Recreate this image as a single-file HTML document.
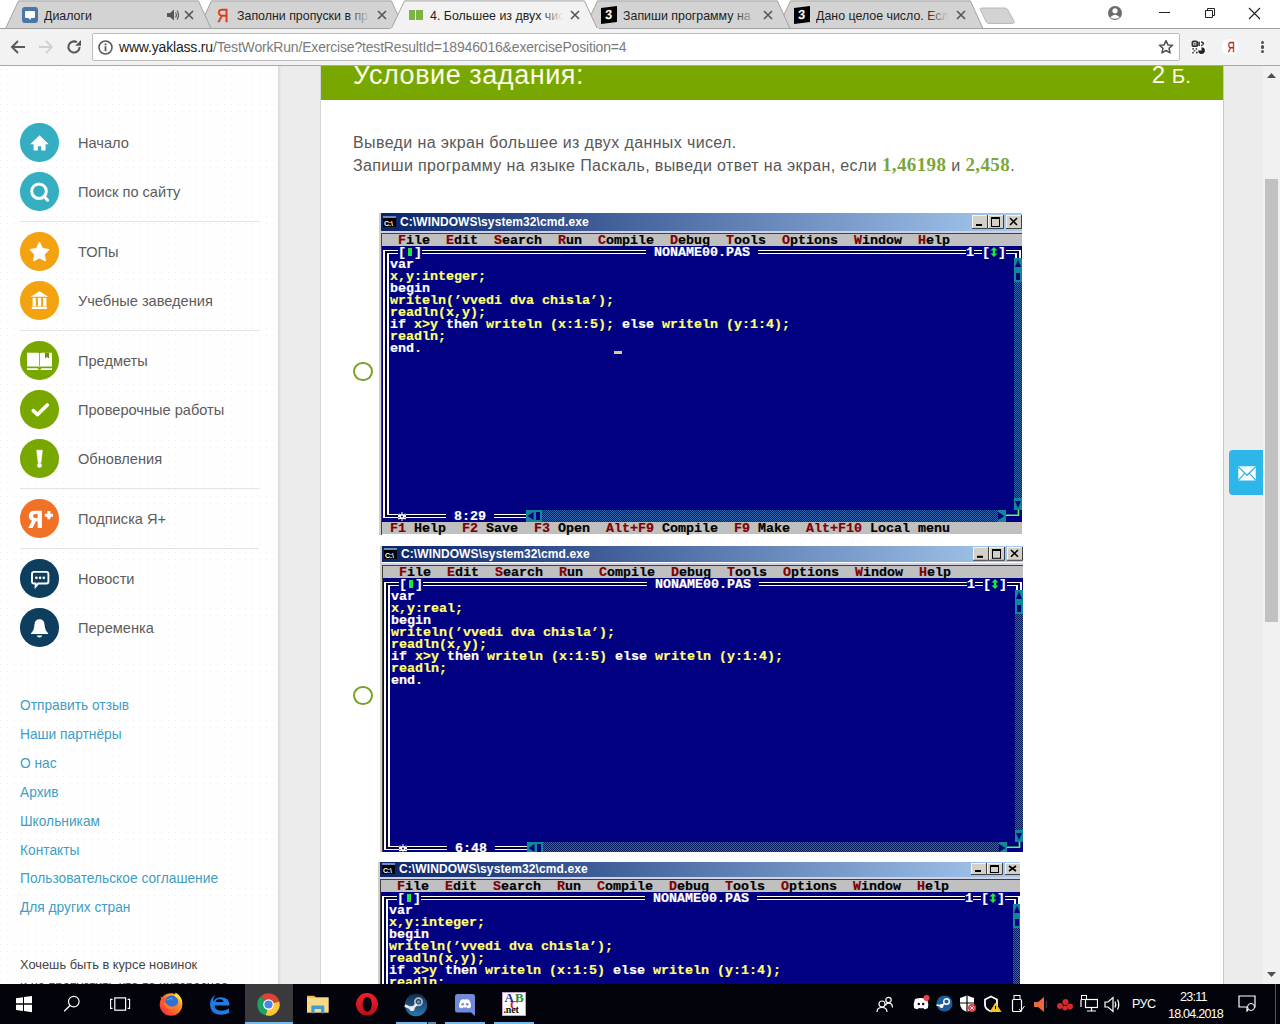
<!DOCTYPE html><html><head><meta charset="utf-8"><title>yaklass</title><style>
html,body{margin:0;padding:0;width:1280px;height:1024px;overflow:hidden;background:#fff;position:relative;font-family:"Liberation Sans",sans-serif}
div,svg{box-sizing:content-box}
</style></head><body>
<div style="position:absolute;left:0;top:66px;width:1280px;height:918px;background:#ececec"></div>
<div style="position:absolute;left:0;top:66px;width:278px;height:918px;background-color:#fff;background-image:radial-gradient(circle at 0.5px 3.5px,#ededed 0.5px,rgba(255,255,255,0) 0.9px);background-size:7px 7px;border-right:1px solid #dadada;box-shadow:1px 0 2px rgba(0,0,0,0.08)"></div>
<div style="position:absolute;left:20px;top:123.25px;width:38.5px;height:38.5px;border-radius:50%;background:#35aec2"></div>
<svg style="position:absolute;left:19.5px;top:122.5px" width="40" height="40" viewBox="0 0 40 40"><path d="M19.5,12.3 L28.8,21.2 H25.6 V27.4 H21.3 V23.3 H17.8 V27.4 H13.6 V21.2 H10.3 Z" fill="#fff"/></svg>
<div style="position:absolute;left:78px;top:132.5px;font:14.6px/20px 'Liberation Sans',sans-serif;color:#5c5c5c;white-space:nowrap">Начало</div>
<div style="position:absolute;left:20px;top:172.25px;width:38.5px;height:38.5px;border-radius:50%;background:#35aec2"></div>
<svg style="position:absolute;left:19.5px;top:171.5px" width="40" height="40" viewBox="0 0 40 40"><circle cx="19" cy="19.2" r="7.3" fill="none" stroke="#fff" stroke-width="3"/><path d="M24.2,24.6 L27.6,28.2" stroke="#fff" stroke-width="3" stroke-linecap="round"/></svg>
<div style="position:absolute;left:78px;top:181.5px;font:14.6px/20px 'Liberation Sans',sans-serif;color:#5c5c5c;white-space:nowrap">Поиск по сайту</div>
<div style="position:absolute;left:20px;top:232.25px;width:38.5px;height:38.5px;border-radius:50%;background:#f2a30f"></div>
<svg style="position:absolute;left:19.5px;top:231.5px" width="40" height="40" viewBox="0 0 40 40"><path d="M19.5,10.6 L22.4,16.6 L28.8,17.6 L24.2,22.3 L25.3,28.6 L19.5,25.6 L13.7,28.6 L14.8,22.3 L10.2,17.6 L16.6,16.6Z" fill="#fff" stroke="#fff" stroke-width="1.2" stroke-linejoin="round"/></svg>
<div style="position:absolute;left:78px;top:241.5px;font:14.6px/20px 'Liberation Sans',sans-serif;color:#5c5c5c;white-space:nowrap">ТОПы</div>
<div style="position:absolute;left:20px;top:281.25px;width:38.5px;height:38.5px;border-radius:50%;background:#f2a30f"></div>
<svg style="position:absolute;left:19.5px;top:280.5px" width="40" height="40" viewBox="0 0 40 40"><path d="M19.5,10.2 L28.3,15.7 H10.7Z" fill="#fff"/><rect x="12.6" y="16.9" width="3.2" height="8.4" fill="#fff"/><rect x="17.9" y="16.9" width="3.2" height="8.4" fill="#fff"/><rect x="23.2" y="16.9" width="3.2" height="8.4" fill="#fff"/><rect x="11.8" y="25.7" width="15.2" height="2.3" fill="#fff"/></svg>
<div style="position:absolute;left:78px;top:290.5px;font:14.6px/20px 'Liberation Sans',sans-serif;color:#5c5c5c;white-space:nowrap">Учебные заведения</div>
<div style="position:absolute;left:20px;top:341.25px;width:38.5px;height:38.5px;border-radius:50%;background:#78a800"></div>
<svg style="position:absolute;left:19.5px;top:340.5px" width="40" height="40" viewBox="0 0 40 40"><path d="M7,11.7 H17.6 Q19.5,11.7 19.5,13.6 V26.2 Q19,25.6 18,25.6 H7Z M32,11.7 H21.4 Q19.5,11.7 19.5,13.6 V26.2 Q20,25.6 21,25.6 H32Z" fill="#fff"/><path d="M25,11.7 V17.6 L27,16 L29,17.6 V11.7Z" fill="#6d9500"/><path d="M7,27.3 H17.6 L19.5,29.1 L21.4,27.3 H32 V29.1 H7Z" fill="#fff"/><path d="M17.6,27.3 L19.5,29.1 L21.4,27.3" fill="none" stroke="#78a800" stroke-width="0.8"/><rect x="19.1" y="13" width="0.8" height="12.6" fill="#78a800"/></svg>
<div style="position:absolute;left:78px;top:350.5px;font:14.6px/20px 'Liberation Sans',sans-serif;color:#5c5c5c;white-space:nowrap">Предметы</div>
<div style="position:absolute;left:20px;top:390.25px;width:38.5px;height:38.5px;border-radius:50%;background:#78a800"></div>
<svg style="position:absolute;left:19.5px;top:389.5px" width="40" height="40" viewBox="0 0 40 40"><path d="M13.2,20.6 L17.6,24.6 L27.3,14.9" fill="none" stroke="#fff" stroke-width="3.6" stroke-linecap="round" stroke-linejoin="round"/></svg>
<div style="position:absolute;left:78px;top:399.5px;font:14.6px/20px 'Liberation Sans',sans-serif;color:#5c5c5c;white-space:nowrap">Проверочные работы</div>
<div style="position:absolute;left:20px;top:439.25px;width:38.5px;height:38.5px;border-radius:50%;background:#78a800"></div>
<svg style="position:absolute;left:19.5px;top:438.5px" width="40" height="40" viewBox="0 0 40 40"><path d="M16.7,11.2 H22.4 L21,23.5 H18.2Z" fill="#fff" stroke="#fff" stroke-width="0.6" stroke-linejoin="round"/><circle cx="19.5" cy="26.4" r="2.4" fill="#fff"/></svg>
<div style="position:absolute;left:78px;top:448.5px;font:14.6px/20px 'Liberation Sans',sans-serif;color:#5c5c5c;white-space:nowrap">Обновления</div>
<div style="position:absolute;left:20px;top:499.25px;width:38.5px;height:38.5px;border-radius:50%;background:#f07227"></div>
<svg style="position:absolute;left:19.5px;top:498.5px" width="40" height="40" viewBox="0 0 40 40"><path d="M21.9,11.7 H15.2 Q8.8,11.7 8.8,17 Q8.8,20.5 12,21.7 L8.2,28.9 H12.6 L15.9,22.2 H17.7 V28.9 H21.9Z M17.7,15 H15.6 Q13,15 13,17 Q13,19 15.6,19 H17.7Z" fill="#fff" fill-rule="evenodd"/><path d="M28.9,12.1 V20.3 M24.8,16.2 H33" stroke="#fff" stroke-width="3"/></svg>
<div style="position:absolute;left:78px;top:508.5px;font:14.6px/20px 'Liberation Sans',sans-serif;color:#5c5c5c;white-space:nowrap">Подписка Я+</div>
<div style="position:absolute;left:20px;top:559.25px;width:38.5px;height:38.5px;border-radius:50%;background:#0e3e5d"></div>
<svg style="position:absolute;left:19.5px;top:558.5px" width="40" height="40" viewBox="0 0 40 40"><path d="M14,12.9 H26.4 Q28.4,12.9 28.4,14.9 V22.5 Q28.4,24.5 26.4,24.5 H18.3 L15.6,27.6 V24.5 H14 Q12,24.5 12,22.5 V14.9 Q12,12.9 14,12.9Z" fill="none" stroke="#fff" stroke-width="1.9"/><circle cx="16.4" cy="18.8" r="1.35" fill="#fff"/><circle cx="20.1" cy="18.8" r="1.35" fill="#fff"/><circle cx="23.8" cy="18.8" r="1.35" fill="#fff"/></svg>
<div style="position:absolute;left:78px;top:568.5px;font:14.6px/20px 'Liberation Sans',sans-serif;color:#5c5c5c;white-space:nowrap">Новости</div>
<div style="position:absolute;left:20px;top:608.25px;width:38.5px;height:38.5px;border-radius:50%;background:#0e3e5d"></div>
<svg style="position:absolute;left:19.5px;top:607.5px" width="40" height="40" viewBox="0 0 40 40"><path d="M19.5,11.2 Q24.3,11.2 24.6,17 Q24.8,22 28.1,25.3 V26.1 H11 V25.3 Q14.3,22 14.4,17 Q14.7,11.2 19.5,11.2Z" fill="#fff"/><path d="M16.7,27.4 H22.2 Q21.6,29.5 19.5,29.5 Q17.3,29.5 16.7,27.4Z" fill="#fff"/></svg>
<div style="position:absolute;left:78px;top:617.5px;font:14.6px/20px 'Liberation Sans',sans-serif;color:#5c5c5c;white-space:nowrap">Переменка</div>
<div style="position:absolute;left:20px;top:221.0px;width:239px;height:1px;background:#e3e3e3"></div>
<div style="position:absolute;left:20px;top:330.0px;width:239px;height:1px;background:#e3e3e3"></div>
<div style="position:absolute;left:20px;top:488.0px;width:239px;height:1px;background:#e3e3e3"></div>
<div style="position:absolute;left:20px;top:548.0px;width:239px;height:1px;background:#e3e3e3"></div>
<div style="position:absolute;left:20px;top:697.2px;font:13.75px/18px 'Liberation Sans',sans-serif;color:#3f9dc3;white-space:nowrap">Отправить отзыв</div>
<div style="position:absolute;left:20px;top:726.0600000000001px;font:13.75px/18px 'Liberation Sans',sans-serif;color:#3f9dc3;white-space:nowrap">Наши партнёры</div>
<div style="position:absolute;left:20px;top:754.9200000000001px;font:13.75px/18px 'Liberation Sans',sans-serif;color:#3f9dc3;white-space:nowrap">О нас</div>
<div style="position:absolute;left:20px;top:783.7800000000001px;font:13.75px/18px 'Liberation Sans',sans-serif;color:#3f9dc3;white-space:nowrap">Архив</div>
<div style="position:absolute;left:20px;top:812.6400000000001px;font:13.75px/18px 'Liberation Sans',sans-serif;color:#3f9dc3;white-space:nowrap">Школьникам</div>
<div style="position:absolute;left:20px;top:841.5px;font:13.75px/18px 'Liberation Sans',sans-serif;color:#3f9dc3;white-space:nowrap">Контакты</div>
<div style="position:absolute;left:20px;top:870.36px;font:13.75px/18px 'Liberation Sans',sans-serif;color:#3f9dc3;white-space:nowrap">Пользовательское соглашение</div>
<div style="position:absolute;left:20px;top:899.22px;font:13.75px/18px 'Liberation Sans',sans-serif;color:#3f9dc3;white-space:nowrap">Для других стран</div>
<div style="position:absolute;left:20px;top:955.8px;font:12.85px/18px 'Liberation Sans',sans-serif;color:#444;white-space:nowrap">Хочешь быть в курсе новинок</div>
<div style="position:absolute;left:20px;top:977px;font:12.85px/18px 'Liberation Sans',sans-serif;color:#444;white-space:nowrap">и не пропустить что-то интересное</div>
<div style="position:absolute;left:320px;top:66px;width:902px;height:918px;background:#fff;border-left:1px solid #d6d6d6;border-right:1px solid #c8c8c8"></div>
<div style="position:absolute;left:321px;top:66px;width:902px;height:34px;background:#78a800;overflow:hidden"><div style="position:absolute;left:32px;top:-11.5px;font:27px/40px 'Liberation Sans',sans-serif;color:#fdfde8;letter-spacing:0.56px;white-space:nowrap">Условие задания:</div><div style="position:absolute;right:32px;top:-11px;font:24px/40px 'Liberation Sans',sans-serif;color:#fdfde8;white-space:nowrap">2 <span style="font-size:20.5px">Б.</span></div></div>
<div style="position:absolute;left:353px;top:132.4px;font:16px/22px 'Liberation Sans',sans-serif;color:#585858;white-space:nowrap;letter-spacing:0.38px">Выведи на экран большее из двух данных чисел.</div>
<div style="position:absolute;left:353px;top:153.9px;font:16px/22px 'Liberation Sans',sans-serif;color:#585858;white-space:nowrap;letter-spacing:0.38px">Запиши программу на языке Паскаль, выведи ответ на экран, если <span style="font:bold 19px/22px 'Liberation Serif',serif;color:#7aa63c;letter-spacing:0.4px">1,46198</span> и <span style="font:bold 19px/22px 'Liberation Serif',serif;color:#7aa63c;letter-spacing:0.4px">2,458</span>.</div>
<div style="position:absolute;left:353.3px;top:362.2px;width:15.3px;height:15.3px;border:2.1px solid #78a22a;border-radius:50%;background:#fff"></div>
<div style="position:absolute;left:353.3px;top:686.2px;width:15.3px;height:15.3px;border:2.1px solid #78a22a;border-radius:50%;background:#fff"></div>
<div style="position:absolute;left:1229px;top:450px;width:34px;height:45px;background:#2cb6ea;border-radius:4px 0 0 4px"></div>
<svg style="position:absolute;left:1238px;top:465.5px" width="18" height="15"><rect x="0.3" y="0.3" width="17.4" height="14.2" fill="#fff"/><path d="M0.3,0.6 L9,9.3 L17.7,0.6" fill="none" stroke="#2cb6ea" stroke-width="1.3"/><path d="M0.3,14.3 L6.8,7.2 M17.7,14.3 L11.2,7.2" stroke="#2cb6ea" stroke-width="1.1"/></svg>
<div style="position:absolute;left:1263px;top:66px;width:17px;height:918px;background:#f1f1f1"></div>
<div style="position:absolute;left:1265px;top:179px;width:13px;height:443px;background:#c1c1c1"></div>
<svg style="position:absolute;left:1266px;top:71px" width="11" height="8"><path d="M1,7 L5.5,2 L10,7Z" fill="#505050"/></svg>
<svg style="position:absolute;left:1266px;top:971px" width="11" height="8"><path d="M1,1 L5.5,6 L10,1Z" fill="#505050"/></svg>
<svg width="0" height="0" style="position:absolute"><defs><pattern id="chk" width="2" height="2" patternUnits="userSpaceOnUse"><rect width="2" height="2" fill="#001a5c"/><rect x="0" y="0" width="1" height="1" fill="#2e68ac"/><rect x="1" y="1" width="1" height="1" fill="#2e68ac"/></pattern></defs></svg>
<div style="position:absolute;left:0;top:0;width:1280px;height:534.5px;overflow:hidden;pointer-events:none">
<div style="position:absolute;left:378.5px;top:213px;width:2px;height:321.5px;background:#d4d0c8"></div>
<div style="position:absolute;left:380.5px;top:213px;width:641.5px;height:18px;background:linear-gradient(90deg,#0a246a,#a6caf0)"></div>
<div style="position:absolute;left:380.5px;top:231px;width:641.5px;height:3px;background:#d0d2e4"></div>
<div style="position:absolute;left:380.5px;top:232.8px;width:641.5px;height:1.2px;background:#404040"></div>
<div style="position:absolute;left:380.5px;top:232.8px;width:1.5px;height:534.5px;background:#404040"></div>
<div style="position:absolute;left:382.5px;top:216.0px;width:13.5px;height:11px;background:#000;border-top:2px solid #6a8ac0;box-sizing:border-box"><div style="position:absolute;left:1.5px;top:1.5px;font:bold 7px/7px 'Liberation Sans',sans-serif;color:#fff;letter-spacing:-0.2px">C:\</div></div>
<div style="position:absolute;left:400px;top:214.0px;font:bold 12px/16px 'Liberation Sans',sans-serif;color:#fff;white-space:nowrap;letter-spacing:0.1px">C:\WINDOWS\system32\cmd.exe</div>
<svg style="position:absolute;left:972px;top:215.0px" width="16" height="14"><rect x="0" y="0" width="16" height="14" fill="#d4d0c8"/><path d="M0,14 V0 H16" fill="none" stroke="#fff" stroke-width="1.5"/><path d="M0,13.5 H15.5 V0" fill="none" stroke="#404040" stroke-width="1"/><rect x="4" y="9" width="6" height="2" fill="#000"/></svg>
<svg style="position:absolute;left:988px;top:215.0px" width="16" height="14"><rect x="0" y="0" width="16" height="14" fill="#d4d0c8"/><path d="M0,14 V0 H16" fill="none" stroke="#fff" stroke-width="1.5"/><path d="M0,13.5 H15.5 V0" fill="none" stroke="#404040" stroke-width="1"/><rect x="3.5" y="2.5" width="8" height="9" fill="none" stroke="#000" stroke-width="1"/><rect x="3" y="2" width="9" height="2" fill="#000"/></svg>
<svg style="position:absolute;left:1006px;top:215.0px" width="16" height="14"><rect x="0" y="0" width="16" height="14" fill="#d4d0c8"/><path d="M0,14 V0 H16" fill="none" stroke="#fff" stroke-width="1.5"/><path d="M0,13.5 H15.5 V0" fill="none" stroke="#404040" stroke-width="1"/><path d="M4,3 L11,10 M11,3 L4,10" stroke="#000" stroke-width="1.6"/></svg>
<div style="position:absolute;left:382px;top:234px;width:640px;height:300px;background:#000080"></div>
<div style="position:absolute;left:382px;top:234px;width:640px;height:12px;background:#c0c0c0"></div>
<div style="position:absolute;left:398px;top:234.5px;height:12px;font:bold 13.333px/12px 'Liberation Mono',monospace;white-space:pre;-webkit-text-stroke:0.2px currentColor;"><span style="color:#800000">F</span><span style="color:#000">ile</span></div>
<div style="position:absolute;left:446px;top:234.5px;height:12px;font:bold 13.333px/12px 'Liberation Mono',monospace;white-space:pre;-webkit-text-stroke:0.2px currentColor;"><span style="color:#800000">E</span><span style="color:#000">dit</span></div>
<div style="position:absolute;left:494px;top:234.5px;height:12px;font:bold 13.333px/12px 'Liberation Mono',monospace;white-space:pre;-webkit-text-stroke:0.2px currentColor;"><span style="color:#800000">S</span><span style="color:#000">earch</span></div>
<div style="position:absolute;left:558px;top:234.5px;height:12px;font:bold 13.333px/12px 'Liberation Mono',monospace;white-space:pre;-webkit-text-stroke:0.2px currentColor;"><span style="color:#800000">R</span><span style="color:#000">un</span></div>
<div style="position:absolute;left:598px;top:234.5px;height:12px;font:bold 13.333px/12px 'Liberation Mono',monospace;white-space:pre;-webkit-text-stroke:0.2px currentColor;"><span style="color:#800000">C</span><span style="color:#000">ompile</span></div>
<div style="position:absolute;left:670px;top:234.5px;height:12px;font:bold 13.333px/12px 'Liberation Mono',monospace;white-space:pre;-webkit-text-stroke:0.2px currentColor;"><span style="color:#800000">D</span><span style="color:#000">ebug</span></div>
<div style="position:absolute;left:726px;top:234.5px;height:12px;font:bold 13.333px/12px 'Liberation Mono',monospace;white-space:pre;-webkit-text-stroke:0.2px currentColor;"><span style="color:#800000">T</span><span style="color:#000">ools</span></div>
<div style="position:absolute;left:782px;top:234.5px;height:12px;font:bold 13.333px/12px 'Liberation Mono',monospace;white-space:pre;-webkit-text-stroke:0.2px currentColor;"><span style="color:#800000">O</span><span style="color:#000">ptions</span></div>
<div style="position:absolute;left:854px;top:234.5px;height:12px;font:bold 13.333px/12px 'Liberation Mono',monospace;white-space:pre;-webkit-text-stroke:0.2px currentColor;"><span style="color:#800000">W</span><span style="color:#000">indow</span></div>
<div style="position:absolute;left:918px;top:234.5px;height:12px;font:bold 13.333px/12px 'Liberation Mono',monospace;white-space:pre;-webkit-text-stroke:0.2px currentColor;"><span style="color:#800000">H</span><span style="color:#000">elp</span></div>
<div style="position:absolute;left:385px;top:251px;width:634px;height:2px;background:#00003c"></div>
<div style="position:absolute;left:385px;top:251px;width:2px;height:266px;background:#00003c"></div>
<div style="position:absolute;left:385px;top:515px;width:629px;height:2px;background:#00003c"></div>
<div style="position:absolute;left:383px;top:250px;width:638px;height:1px;background:#fff"></div>
<div style="position:absolute;left:383px;top:250px;width:2px;height:268px;background:#fff"></div>
<div style="position:absolute;left:383px;top:517px;width:631px;height:1px;background:#fff"></div>
<div style="position:absolute;left:1019px;top:250px;width:2px;height:20px;background:#fff"></div>
<div style="position:absolute;left:387px;top:253px;width:630px;height:1px;background:#fff"></div>
<div style="position:absolute;left:387px;top:253px;width:2px;height:262px;background:#fff"></div>
<div style="position:absolute;left:387px;top:514px;width:627px;height:1px;background:#fff"></div>
<div style="position:absolute;left:1015px;top:253px;width:2px;height:17px;background:#fff"></div>
<div style="position:absolute;left:398px;top:246px;width:24px;height:12px;background:#000080"></div>
<div style="position:absolute;left:646px;top:246px;width:112px;height:12px;background:#000080"></div>
<div style="position:absolute;left:966px;top:246px;width:8px;height:12px;background:#000080"></div>
<div style="position:absolute;left:982px;top:246px;width:24px;height:12px;background:#000080"></div>
<div style="position:absolute;left:398px;top:246.5px;height:12px;font:bold 13.333px/12px 'Liberation Mono',monospace;white-space:pre;-webkit-text-stroke:0.2px currentColor;"><span style="color:#fff">[ ]</span></div>
<div style="position:absolute;left:408px;top:248px;width:4.2px;height:8px;background:#1ee83c"></div>
<div style="position:absolute;left:646px;top:246.5px;height:12px;font:bold 13.333px/12px 'Liberation Mono',monospace;white-space:pre;-webkit-text-stroke:0.2px currentColor;"><span style="color:#fff"> NONAME00.PAS </span></div>
<div style="position:absolute;left:966px;top:246.5px;height:12px;font:bold 13.333px/12px 'Liberation Mono',monospace;white-space:pre;-webkit-text-stroke:0.2px currentColor;"><span style="color:#fff">1</span></div>
<div style="position:absolute;left:982px;top:246.5px;height:12px;font:bold 13.333px/12px 'Liberation Mono',monospace;white-space:pre;-webkit-text-stroke:0.2px currentColor;"><span style="color:#fff">[ ]</span></div>
<svg style="position:absolute;left:990px;top:246px" width="8" height="12"><path d="M4,1 L7.5,4.5 H5.2 V7.5 H7.5 L4,11 L0.5,7.5 H2.8 V4.5 H0.5Z" fill="#1ee83c"/></svg>
<div style="position:absolute;left:390px;top:258.5px;height:12px;font:bold 13.333px/12px 'Liberation Mono',monospace;white-space:pre;-webkit-text-stroke:0.2px currentColor;"><span style="color:#ffffff">var</span></div>
<div style="position:absolute;left:390px;top:270.5px;height:12px;font:bold 13.333px/12px 'Liberation Mono',monospace;white-space:pre;-webkit-text-stroke:0.2px currentColor;"><span style="color:#ffff70">x</span><span style="color:#ffff70">,</span><span style="color:#ffff70">y</span><span style="color:#ffff70">:</span><span style="color:#ffff70">integer</span><span style="color:#ffff70">;</span></div>
<div style="position:absolute;left:390px;top:282.5px;height:12px;font:bold 13.333px/12px 'Liberation Mono',monospace;white-space:pre;-webkit-text-stroke:0.2px currentColor;"><span style="color:#ffffff">begin</span></div>
<div style="position:absolute;left:390px;top:294.5px;height:12px;font:bold 13.333px/12px 'Liberation Mono',monospace;white-space:pre;-webkit-text-stroke:0.2px currentColor;"><span style="color:#ffff70">writeln</span><span style="color:#ffff70">(’</span><span style="color:#ffff70">vvedi</span><span style="color:#ffff70"> </span><span style="color:#ffff70">dva</span><span style="color:#ffff70"> </span><span style="color:#ffff70">chisla</span><span style="color:#ffff70">’);</span></div>
<div style="position:absolute;left:390px;top:306.5px;height:12px;font:bold 13.333px/12px 'Liberation Mono',monospace;white-space:pre;-webkit-text-stroke:0.2px currentColor;"><span style="color:#ffff70">readln</span><span style="color:#ffff70">(</span><span style="color:#ffff70">x</span><span style="color:#ffff70">,</span><span style="color:#ffff70">y</span><span style="color:#ffff70">);</span></div>
<div style="position:absolute;left:390px;top:318.5px;height:12px;font:bold 13.333px/12px 'Liberation Mono',monospace;white-space:pre;-webkit-text-stroke:0.2px currentColor;"><span style="color:#ffffff">if</span><span style="color:#ffff70"> </span><span style="color:#ffff70">x</span><span style="color:#ffff70">&gt;</span><span style="color:#ffff70">y</span><span style="color:#ffff70"> </span><span style="color:#ffffff">then</span><span style="color:#ffff70"> </span><span style="color:#ffff70">writeln</span><span style="color:#ffff70"> (</span><span style="color:#ffff70">x</span><span style="color:#ffff70">:1:5); </span><span style="color:#ffffff">else</span><span style="color:#ffff70"> </span><span style="color:#ffff70">writeln</span><span style="color:#ffff70"> (</span><span style="color:#ffff70">y</span><span style="color:#ffff70">:1:4);</span></div>
<div style="position:absolute;left:390px;top:330.5px;height:12px;font:bold 13.333px/12px 'Liberation Mono',monospace;white-space:pre;-webkit-text-stroke:0.2px currentColor;"><span style="color:#ffff70">readln</span><span style="color:#ffff70">;</span></div>
<div style="position:absolute;left:390px;top:342.5px;height:12px;font:bold 13.333px/12px 'Liberation Mono',monospace;white-space:pre;-webkit-text-stroke:0.2px currentColor;"><span style="color:#ffffff">end</span><span style="color:#ffff70">.</span></div>
<svg style="position:absolute;left:1014px;top:258px" width="8" height="252"><rect x="0" y="0" width="8" height="252" fill="url(#chk)"/><rect x="0" y="0" width="8" height="24" fill="#108898"/><path d="M4,1.5 L7,9 H1Z" fill="#000080"/><rect x="2" y="15" width="4" height="7" fill="#000080"/><rect x="0" y="240" width="8" height="12" fill="#108898"/><path d="M1,243 H7 L4,250Z" fill="#000080"/></svg>
<div style="position:absolute;left:446px;top:510px;width:48px;height:12px;background:#000080"></div>
<div style="position:absolute;left:446px;top:510.5px;height:12px;font:bold 13.333px/12px 'Liberation Mono',monospace;white-space:pre;-webkit-text-stroke:0.2px currentColor;"><span style="color:#fff"> 8:29 </span></div>
<div style="position:absolute;left:398px;top:510px;width:8px;height:12px;background:#000080"></div>
<svg style="position:absolute;left:398px;top:510px" width="8" height="12"><path d="M0,5.2 H8 M0,8.2 H8" stroke="#fff" stroke-width="1.6"/><circle cx="4" cy="6.5" r="2.3" fill="#fff"/><path d="M4,2 V11 M0,6.5 H8 M1,3.5 L7,9.5 M7,3.5 L1,9.5" stroke="#fff" stroke-width="1"/><circle cx="4" cy="6.5" r="1" fill="#000080"/></svg>
<svg style="position:absolute;left:526px;top:510px" width="480" height="12"><rect x="0" y="0" width="480" height="12" fill="url(#chk)"/><rect x="0" y="0" width="16" height="12" fill="#108898"/><path d="M1.5,6 L7.5,2 V10Z" fill="#000080"/><rect x="10" y="2" width="4" height="8" fill="#000080"/><rect x="472" y="0" width="8" height="12" fill="#108898"/><path d="M478.5,6 L472,2 V10Z" fill="#000080"/></svg>
<div style="position:absolute;left:1006px;top:510px;width:16px;height:12px;background:#000080"></div>
<svg style="position:absolute;left:1006px;top:510px" width="16" height="12"><path d="M0,5.3 H12.5 V0" fill="none" stroke="#55ff55" stroke-width="1.6"/></svg>
<div style="position:absolute;left:382px;top:522px;width:640px;height:12px;background:#c0c0c0"></div>
<div style="position:absolute;left:390px;top:522.5px;height:12px;font:bold 13.333px/12px 'Liberation Mono',monospace;white-space:pre;-webkit-text-stroke:0.2px currentColor;"><span style="color:#800000">F1</span><span style="color:#000"> Help</span></div>
<div style="position:absolute;left:462px;top:522.5px;height:12px;font:bold 13.333px/12px 'Liberation Mono',monospace;white-space:pre;-webkit-text-stroke:0.2px currentColor;"><span style="color:#800000">F2</span><span style="color:#000"> Save</span></div>
<div style="position:absolute;left:534px;top:522.5px;height:12px;font:bold 13.333px/12px 'Liberation Mono',monospace;white-space:pre;-webkit-text-stroke:0.2px currentColor;"><span style="color:#800000">F3</span><span style="color:#000"> Open</span></div>
<div style="position:absolute;left:606px;top:522.5px;height:12px;font:bold 13.333px/12px 'Liberation Mono',monospace;white-space:pre;-webkit-text-stroke:0.2px currentColor;"><span style="color:#800000">Alt+F9</span><span style="color:#000"> Compile</span></div>
<div style="position:absolute;left:734px;top:522.5px;height:12px;font:bold 13.333px/12px 'Liberation Mono',monospace;white-space:pre;-webkit-text-stroke:0.2px currentColor;"><span style="color:#800000">F9</span><span style="color:#000"> Make</span></div>
<div style="position:absolute;left:806px;top:522.5px;height:12px;font:bold 13.333px/12px 'Liberation Mono',monospace;white-space:pre;-webkit-text-stroke:0.2px currentColor;"><span style="color:#800000">Alt+F10</span><span style="color:#000"> Local menu</span></div>
</div>
<div style="position:absolute;left:614px;top:351px;width:8px;height:3px;background:#d8d08a"></div>
<div style="position:absolute;left:0;top:0;width:1280px;height:852px;overflow:hidden;pointer-events:none">
<div style="position:absolute;left:379.5px;top:546.2px;width:2px;height:305.79999999999995px;background:#d4d0c8"></div>
<div style="position:absolute;left:381.5px;top:546.2px;width:641.5px;height:16.299999999999955px;background:linear-gradient(90deg,#0a246a,#a6caf0)"></div>
<div style="position:absolute;left:381.5px;top:562.5px;width:641.5px;height:3.5px;background:#d0d2e4"></div>
<div style="position:absolute;left:381.5px;top:564.8px;width:641.5px;height:1.2px;background:#404040"></div>
<div style="position:absolute;left:381.5px;top:564.8px;width:1.5px;height:852px;background:#404040"></div>
<div style="position:absolute;left:383.5px;top:548.35px;width:13.5px;height:11px;background:#000;border-top:2px solid #6a8ac0;box-sizing:border-box"><div style="position:absolute;left:1.5px;top:1.5px;font:bold 7px/7px 'Liberation Sans',sans-serif;color:#fff;letter-spacing:-0.2px">C:\</div></div>
<div style="position:absolute;left:401px;top:546.35px;font:bold 12px/16px 'Liberation Sans',sans-serif;color:#fff;white-space:nowrap;letter-spacing:0.1px">C:\WINDOWS\system32\cmd.exe</div>
<svg style="position:absolute;left:973px;top:547.45px" width="16" height="13.799999999999955"><rect x="0" y="0" width="16" height="13.799999999999955" fill="#d4d0c8"/><path d="M0,13.799999999999955 V0 H16" fill="none" stroke="#fff" stroke-width="1.5"/><path d="M0,13.299999999999955 H15.5 V0" fill="none" stroke="#404040" stroke-width="1"/><rect x="4" y="8.799999999999955" width="6" height="2" fill="#000"/></svg>
<svg style="position:absolute;left:989px;top:547.45px" width="16" height="13.799999999999955"><rect x="0" y="0" width="16" height="13.799999999999955" fill="#d4d0c8"/><path d="M0,13.799999999999955 V0 H16" fill="none" stroke="#fff" stroke-width="1.5"/><path d="M0,13.299999999999955 H15.5 V0" fill="none" stroke="#404040" stroke-width="1"/><rect x="3.5" y="2.5" width="8" height="8.799999999999955" fill="none" stroke="#000" stroke-width="1"/><rect x="3" y="2" width="9" height="2" fill="#000"/></svg>
<svg style="position:absolute;left:1007px;top:547.45px" width="16" height="13.799999999999955"><rect x="0" y="0" width="16" height="13.799999999999955" fill="#d4d0c8"/><path d="M0,13.799999999999955 V0 H16" fill="none" stroke="#fff" stroke-width="1.5"/><path d="M0,13.299999999999955 H15.5 V0" fill="none" stroke="#404040" stroke-width="1"/><path d="M4,3 L11,9.799999999999955 M11,3 L4,9.799999999999955" stroke="#000" stroke-width="1.6"/></svg>
<div style="position:absolute;left:383px;top:566px;width:640px;height:300px;background:#000080"></div>
<div style="position:absolute;left:383px;top:566px;width:640px;height:12px;background:#c0c0c0"></div>
<div style="position:absolute;left:399px;top:566.5px;height:12px;font:bold 13.333px/12px 'Liberation Mono',monospace;white-space:pre;-webkit-text-stroke:0.2px currentColor;"><span style="color:#800000">F</span><span style="color:#000">ile</span></div>
<div style="position:absolute;left:447px;top:566.5px;height:12px;font:bold 13.333px/12px 'Liberation Mono',monospace;white-space:pre;-webkit-text-stroke:0.2px currentColor;"><span style="color:#800000">E</span><span style="color:#000">dit</span></div>
<div style="position:absolute;left:495px;top:566.5px;height:12px;font:bold 13.333px/12px 'Liberation Mono',monospace;white-space:pre;-webkit-text-stroke:0.2px currentColor;"><span style="color:#800000">S</span><span style="color:#000">earch</span></div>
<div style="position:absolute;left:559px;top:566.5px;height:12px;font:bold 13.333px/12px 'Liberation Mono',monospace;white-space:pre;-webkit-text-stroke:0.2px currentColor;"><span style="color:#800000">R</span><span style="color:#000">un</span></div>
<div style="position:absolute;left:599px;top:566.5px;height:12px;font:bold 13.333px/12px 'Liberation Mono',monospace;white-space:pre;-webkit-text-stroke:0.2px currentColor;"><span style="color:#800000">C</span><span style="color:#000">ompile</span></div>
<div style="position:absolute;left:671px;top:566.5px;height:12px;font:bold 13.333px/12px 'Liberation Mono',monospace;white-space:pre;-webkit-text-stroke:0.2px currentColor;"><span style="color:#800000">D</span><span style="color:#000">ebug</span></div>
<div style="position:absolute;left:727px;top:566.5px;height:12px;font:bold 13.333px/12px 'Liberation Mono',monospace;white-space:pre;-webkit-text-stroke:0.2px currentColor;"><span style="color:#800000">T</span><span style="color:#000">ools</span></div>
<div style="position:absolute;left:783px;top:566.5px;height:12px;font:bold 13.333px/12px 'Liberation Mono',monospace;white-space:pre;-webkit-text-stroke:0.2px currentColor;"><span style="color:#800000">O</span><span style="color:#000">ptions</span></div>
<div style="position:absolute;left:855px;top:566.5px;height:12px;font:bold 13.333px/12px 'Liberation Mono',monospace;white-space:pre;-webkit-text-stroke:0.2px currentColor;"><span style="color:#800000">W</span><span style="color:#000">indow</span></div>
<div style="position:absolute;left:919px;top:566.5px;height:12px;font:bold 13.333px/12px 'Liberation Mono',monospace;white-space:pre;-webkit-text-stroke:0.2px currentColor;"><span style="color:#800000">H</span><span style="color:#000">elp</span></div>
<div style="position:absolute;left:386px;top:583px;width:634px;height:2px;background:#00003c"></div>
<div style="position:absolute;left:386px;top:583px;width:2px;height:266px;background:#00003c"></div>
<div style="position:absolute;left:386px;top:847px;width:629px;height:2px;background:#00003c"></div>
<div style="position:absolute;left:384px;top:582px;width:638px;height:1px;background:#fff"></div>
<div style="position:absolute;left:384px;top:582px;width:2px;height:268px;background:#fff"></div>
<div style="position:absolute;left:384px;top:849px;width:631px;height:1px;background:#fff"></div>
<div style="position:absolute;left:1020px;top:582px;width:2px;height:20px;background:#fff"></div>
<div style="position:absolute;left:388px;top:585px;width:630px;height:1px;background:#fff"></div>
<div style="position:absolute;left:388px;top:585px;width:2px;height:262px;background:#fff"></div>
<div style="position:absolute;left:388px;top:846px;width:627px;height:1px;background:#fff"></div>
<div style="position:absolute;left:1016px;top:585px;width:2px;height:17px;background:#fff"></div>
<div style="position:absolute;left:399px;top:578px;width:24px;height:12px;background:#000080"></div>
<div style="position:absolute;left:647px;top:578px;width:112px;height:12px;background:#000080"></div>
<div style="position:absolute;left:967px;top:578px;width:8px;height:12px;background:#000080"></div>
<div style="position:absolute;left:983px;top:578px;width:24px;height:12px;background:#000080"></div>
<div style="position:absolute;left:399px;top:578.5px;height:12px;font:bold 13.333px/12px 'Liberation Mono',monospace;white-space:pre;-webkit-text-stroke:0.2px currentColor;"><span style="color:#fff">[ ]</span></div>
<div style="position:absolute;left:409px;top:580px;width:4.2px;height:8px;background:#1ee83c"></div>
<div style="position:absolute;left:647px;top:578.5px;height:12px;font:bold 13.333px/12px 'Liberation Mono',monospace;white-space:pre;-webkit-text-stroke:0.2px currentColor;"><span style="color:#fff"> NONAME00.PAS </span></div>
<div style="position:absolute;left:967px;top:578.5px;height:12px;font:bold 13.333px/12px 'Liberation Mono',monospace;white-space:pre;-webkit-text-stroke:0.2px currentColor;"><span style="color:#fff">1</span></div>
<div style="position:absolute;left:983px;top:578.5px;height:12px;font:bold 13.333px/12px 'Liberation Mono',monospace;white-space:pre;-webkit-text-stroke:0.2px currentColor;"><span style="color:#fff">[ ]</span></div>
<svg style="position:absolute;left:991px;top:578px" width="8" height="12"><path d="M4,1 L7.5,4.5 H5.2 V7.5 H7.5 L4,11 L0.5,7.5 H2.8 V4.5 H0.5Z" fill="#1ee83c"/></svg>
<div style="position:absolute;left:391px;top:590.5px;height:12px;font:bold 13.333px/12px 'Liberation Mono',monospace;white-space:pre;-webkit-text-stroke:0.2px currentColor;"><span style="color:#ffffff">var</span></div>
<div style="position:absolute;left:391px;top:602.5px;height:12px;font:bold 13.333px/12px 'Liberation Mono',monospace;white-space:pre;-webkit-text-stroke:0.2px currentColor;"><span style="color:#ffff70">x</span><span style="color:#ffff70">,</span><span style="color:#ffff70">y</span><span style="color:#ffff70">:</span><span style="color:#ffff70">real</span><span style="color:#ffff70">;</span></div>
<div style="position:absolute;left:391px;top:614.5px;height:12px;font:bold 13.333px/12px 'Liberation Mono',monospace;white-space:pre;-webkit-text-stroke:0.2px currentColor;"><span style="color:#ffffff">begin</span></div>
<div style="position:absolute;left:391px;top:626.5px;height:12px;font:bold 13.333px/12px 'Liberation Mono',monospace;white-space:pre;-webkit-text-stroke:0.2px currentColor;"><span style="color:#ffff70">writeln</span><span style="color:#ffff70">(’</span><span style="color:#ffff70">vvedi</span><span style="color:#ffff70"> </span><span style="color:#ffff70">dva</span><span style="color:#ffff70"> </span><span style="color:#ffff70">chisla</span><span style="color:#ffff70">’);</span></div>
<div style="position:absolute;left:391px;top:638.5px;height:12px;font:bold 13.333px/12px 'Liberation Mono',monospace;white-space:pre;-webkit-text-stroke:0.2px currentColor;"><span style="color:#ffff70">readln</span><span style="color:#ffff70">(</span><span style="color:#ffff70">x</span><span style="color:#ffff70">,</span><span style="color:#ffff70">y</span><span style="color:#ffff70">);</span></div>
<div style="position:absolute;left:391px;top:650.5px;height:12px;font:bold 13.333px/12px 'Liberation Mono',monospace;white-space:pre;-webkit-text-stroke:0.2px currentColor;"><span style="color:#ffffff">if</span><span style="color:#ffff70"> </span><span style="color:#ffff70">x</span><span style="color:#ffff70">&gt;</span><span style="color:#ffff70">y</span><span style="color:#ffff70"> </span><span style="color:#ffffff">then</span><span style="color:#ffff70"> </span><span style="color:#ffff70">writeln</span><span style="color:#ffff70"> (</span><span style="color:#ffff70">x</span><span style="color:#ffff70">:1:5) </span><span style="color:#ffffff">else</span><span style="color:#ffff70"> </span><span style="color:#ffff70">writeln</span><span style="color:#ffff70"> (</span><span style="color:#ffff70">y</span><span style="color:#ffff70">:1:4);</span></div>
<div style="position:absolute;left:391px;top:662.5px;height:12px;font:bold 13.333px/12px 'Liberation Mono',monospace;white-space:pre;-webkit-text-stroke:0.2px currentColor;"><span style="color:#ffff70">readln</span><span style="color:#ffff70">;</span></div>
<div style="position:absolute;left:391px;top:674.5px;height:12px;font:bold 13.333px/12px 'Liberation Mono',monospace;white-space:pre;-webkit-text-stroke:0.2px currentColor;"><span style="color:#ffffff">end</span><span style="color:#ffff70">.</span></div>
<svg style="position:absolute;left:1015px;top:590px" width="8" height="252"><rect x="0" y="0" width="8" height="252" fill="url(#chk)"/><rect x="0" y="0" width="8" height="24" fill="#108898"/><path d="M4,1.5 L7,9 H1Z" fill="#000080"/><rect x="2" y="15" width="4" height="7" fill="#000080"/><rect x="0" y="240" width="8" height="12" fill="#108898"/><path d="M1,243 H7 L4,250Z" fill="#000080"/></svg>
<div style="position:absolute;left:447px;top:842px;width:48px;height:12px;background:#000080"></div>
<div style="position:absolute;left:447px;top:842.5px;height:12px;font:bold 13.333px/12px 'Liberation Mono',monospace;white-space:pre;-webkit-text-stroke:0.2px currentColor;"><span style="color:#fff"> 6:48 </span></div>
<div style="position:absolute;left:399px;top:842px;width:8px;height:12px;background:#000080"></div>
<svg style="position:absolute;left:399px;top:842px" width="8" height="12"><path d="M0,5.2 H8 M0,8.2 H8" stroke="#fff" stroke-width="1.6"/><circle cx="4" cy="6.5" r="2.3" fill="#fff"/><path d="M4,2 V11 M0,6.5 H8 M1,3.5 L7,9.5 M7,3.5 L1,9.5" stroke="#fff" stroke-width="1"/><circle cx="4" cy="6.5" r="1" fill="#000080"/></svg>
<svg style="position:absolute;left:527px;top:842px" width="480" height="12"><rect x="0" y="0" width="480" height="12" fill="url(#chk)"/><rect x="0" y="0" width="16" height="12" fill="#108898"/><path d="M1.5,6 L7.5,2 V10Z" fill="#000080"/><rect x="10" y="2" width="4" height="8" fill="#000080"/><rect x="472" y="0" width="8" height="12" fill="#108898"/><path d="M478.5,6 L472,2 V10Z" fill="#000080"/></svg>
<div style="position:absolute;left:1007px;top:842px;width:16px;height:12px;background:#000080"></div>
<svg style="position:absolute;left:1007px;top:842px" width="16" height="12"><path d="M0,5.3 H12.5 V0" fill="none" stroke="#55ff55" stroke-width="1.6"/></svg>
<div style="position:absolute;left:383px;top:854px;width:640px;height:12px;background:#c0c0c0"></div>
<div style="position:absolute;left:391px;top:854.5px;height:12px;font:bold 13.333px/12px 'Liberation Mono',monospace;white-space:pre;-webkit-text-stroke:0.2px currentColor;"><span style="color:#800000">F1</span><span style="color:#000"> Help</span></div>
<div style="position:absolute;left:463px;top:854.5px;height:12px;font:bold 13.333px/12px 'Liberation Mono',monospace;white-space:pre;-webkit-text-stroke:0.2px currentColor;"><span style="color:#800000">F2</span><span style="color:#000"> Save</span></div>
<div style="position:absolute;left:535px;top:854.5px;height:12px;font:bold 13.333px/12px 'Liberation Mono',monospace;white-space:pre;-webkit-text-stroke:0.2px currentColor;"><span style="color:#800000">F3</span><span style="color:#000"> Open</span></div>
<div style="position:absolute;left:607px;top:854.5px;height:12px;font:bold 13.333px/12px 'Liberation Mono',monospace;white-space:pre;-webkit-text-stroke:0.2px currentColor;"><span style="color:#800000">Alt+F9</span><span style="color:#000"> Compile</span></div>
<div style="position:absolute;left:735px;top:854.5px;height:12px;font:bold 13.333px/12px 'Liberation Mono',monospace;white-space:pre;-webkit-text-stroke:0.2px currentColor;"><span style="color:#800000">F9</span><span style="color:#000"> Make</span></div>
<div style="position:absolute;left:807px;top:854.5px;height:12px;font:bold 13.333px/12px 'Liberation Mono',monospace;white-space:pre;-webkit-text-stroke:0.2px currentColor;"><span style="color:#800000">Alt+F10</span><span style="color:#000"> Local menu</span></div>
</div>
<div style="position:absolute;left:0;top:0;width:1019.8px;height:984px;overflow:hidden;pointer-events:none">
<div style="position:absolute;left:377.5px;top:862px;width:2px;height:122px;background:#d4d0c8"></div>
<div style="position:absolute;left:379.5px;top:862px;width:641.5px;height:14.5px;background:linear-gradient(90deg,#0a246a,#a6caf0)"></div>
<div style="position:absolute;left:379.5px;top:876.5px;width:641.5px;height:3.5px;background:#d0d2e4"></div>
<div style="position:absolute;left:379.5px;top:878.8px;width:641.5px;height:1.2px;background:#404040"></div>
<div style="position:absolute;left:379.5px;top:878.8px;width:1.5px;height:984px;background:#404040"></div>
<div style="position:absolute;left:381.5px;top:863.25px;width:13.5px;height:11px;background:#000;border-top:2px solid #6a8ac0;box-sizing:border-box"><div style="position:absolute;left:1.5px;top:1.5px;font:bold 7px/7px 'Liberation Sans',sans-serif;color:#fff;letter-spacing:-0.2px">C:\</div></div>
<div style="position:absolute;left:399px;top:861.25px;font:bold 12px/16px 'Liberation Sans',sans-serif;color:#fff;white-space:nowrap;letter-spacing:0.1px">C:\WINDOWS\system32\cmd.exe</div>
<svg style="position:absolute;left:971px;top:863.25px" width="16" height="12.0"><rect x="0" y="0" width="16" height="12.0" fill="#d4d0c8"/><path d="M0,12.0 V0 H16" fill="none" stroke="#fff" stroke-width="1.5"/><path d="M0,11.5 H15.5 V0" fill="none" stroke="#404040" stroke-width="1"/><rect x="4" y="7.0" width="6" height="2" fill="#000"/></svg>
<svg style="position:absolute;left:987px;top:863.25px" width="16" height="12.0"><rect x="0" y="0" width="16" height="12.0" fill="#d4d0c8"/><path d="M0,12.0 V0 H16" fill="none" stroke="#fff" stroke-width="1.5"/><path d="M0,11.5 H15.5 V0" fill="none" stroke="#404040" stroke-width="1"/><rect x="3.5" y="2.5" width="8" height="7.0" fill="none" stroke="#000" stroke-width="1"/><rect x="3" y="2" width="9" height="2" fill="#000"/></svg>
<svg style="position:absolute;left:1005px;top:863.25px" width="16" height="12.0"><rect x="0" y="0" width="16" height="12.0" fill="#d4d0c8"/><path d="M0,12.0 V0 H16" fill="none" stroke="#fff" stroke-width="1.5"/><path d="M0,11.5 H15.5 V0" fill="none" stroke="#404040" stroke-width="1"/><path d="M4,3 L11,8.0 M11,3 L4,8.0" stroke="#000" stroke-width="1.6"/></svg>
<div style="position:absolute;left:381px;top:880px;width:640px;height:300px;background:#000080"></div>
<div style="position:absolute;left:381px;top:880px;width:640px;height:12px;background:#c0c0c0"></div>
<div style="position:absolute;left:397px;top:880.5px;height:12px;font:bold 13.333px/12px 'Liberation Mono',monospace;white-space:pre;-webkit-text-stroke:0.2px currentColor;"><span style="color:#800000">F</span><span style="color:#000">ile</span></div>
<div style="position:absolute;left:445px;top:880.5px;height:12px;font:bold 13.333px/12px 'Liberation Mono',monospace;white-space:pre;-webkit-text-stroke:0.2px currentColor;"><span style="color:#800000">E</span><span style="color:#000">dit</span></div>
<div style="position:absolute;left:493px;top:880.5px;height:12px;font:bold 13.333px/12px 'Liberation Mono',monospace;white-space:pre;-webkit-text-stroke:0.2px currentColor;"><span style="color:#800000">S</span><span style="color:#000">earch</span></div>
<div style="position:absolute;left:557px;top:880.5px;height:12px;font:bold 13.333px/12px 'Liberation Mono',monospace;white-space:pre;-webkit-text-stroke:0.2px currentColor;"><span style="color:#800000">R</span><span style="color:#000">un</span></div>
<div style="position:absolute;left:597px;top:880.5px;height:12px;font:bold 13.333px/12px 'Liberation Mono',monospace;white-space:pre;-webkit-text-stroke:0.2px currentColor;"><span style="color:#800000">C</span><span style="color:#000">ompile</span></div>
<div style="position:absolute;left:669px;top:880.5px;height:12px;font:bold 13.333px/12px 'Liberation Mono',monospace;white-space:pre;-webkit-text-stroke:0.2px currentColor;"><span style="color:#800000">D</span><span style="color:#000">ebug</span></div>
<div style="position:absolute;left:725px;top:880.5px;height:12px;font:bold 13.333px/12px 'Liberation Mono',monospace;white-space:pre;-webkit-text-stroke:0.2px currentColor;"><span style="color:#800000">T</span><span style="color:#000">ools</span></div>
<div style="position:absolute;left:781px;top:880.5px;height:12px;font:bold 13.333px/12px 'Liberation Mono',monospace;white-space:pre;-webkit-text-stroke:0.2px currentColor;"><span style="color:#800000">O</span><span style="color:#000">ptions</span></div>
<div style="position:absolute;left:853px;top:880.5px;height:12px;font:bold 13.333px/12px 'Liberation Mono',monospace;white-space:pre;-webkit-text-stroke:0.2px currentColor;"><span style="color:#800000">W</span><span style="color:#000">indow</span></div>
<div style="position:absolute;left:917px;top:880.5px;height:12px;font:bold 13.333px/12px 'Liberation Mono',monospace;white-space:pre;-webkit-text-stroke:0.2px currentColor;"><span style="color:#800000">H</span><span style="color:#000">elp</span></div>
<div style="position:absolute;left:384px;top:897px;width:634px;height:2px;background:#00003c"></div>
<div style="position:absolute;left:384px;top:897px;width:2px;height:266px;background:#00003c"></div>
<div style="position:absolute;left:384px;top:1161px;width:629px;height:2px;background:#00003c"></div>
<div style="position:absolute;left:382px;top:896px;width:638px;height:1px;background:#fff"></div>
<div style="position:absolute;left:382px;top:896px;width:2px;height:268px;background:#fff"></div>
<div style="position:absolute;left:382px;top:1163px;width:631px;height:1px;background:#fff"></div>
<div style="position:absolute;left:1018px;top:896px;width:2px;height:20px;background:#fff"></div>
<div style="position:absolute;left:386px;top:899px;width:630px;height:1px;background:#fff"></div>
<div style="position:absolute;left:386px;top:899px;width:2px;height:262px;background:#fff"></div>
<div style="position:absolute;left:386px;top:1160px;width:627px;height:1px;background:#fff"></div>
<div style="position:absolute;left:1014px;top:899px;width:2px;height:17px;background:#fff"></div>
<div style="position:absolute;left:397px;top:892px;width:24px;height:12px;background:#000080"></div>
<div style="position:absolute;left:645px;top:892px;width:112px;height:12px;background:#000080"></div>
<div style="position:absolute;left:965px;top:892px;width:8px;height:12px;background:#000080"></div>
<div style="position:absolute;left:981px;top:892px;width:24px;height:12px;background:#000080"></div>
<div style="position:absolute;left:397px;top:892.5px;height:12px;font:bold 13.333px/12px 'Liberation Mono',monospace;white-space:pre;-webkit-text-stroke:0.2px currentColor;"><span style="color:#fff">[ ]</span></div>
<div style="position:absolute;left:407px;top:894px;width:4.2px;height:8px;background:#1ee83c"></div>
<div style="position:absolute;left:645px;top:892.5px;height:12px;font:bold 13.333px/12px 'Liberation Mono',monospace;white-space:pre;-webkit-text-stroke:0.2px currentColor;"><span style="color:#fff"> NONAME00.PAS </span></div>
<div style="position:absolute;left:965px;top:892.5px;height:12px;font:bold 13.333px/12px 'Liberation Mono',monospace;white-space:pre;-webkit-text-stroke:0.2px currentColor;"><span style="color:#fff">1</span></div>
<div style="position:absolute;left:981px;top:892.5px;height:12px;font:bold 13.333px/12px 'Liberation Mono',monospace;white-space:pre;-webkit-text-stroke:0.2px currentColor;"><span style="color:#fff">[ ]</span></div>
<svg style="position:absolute;left:989px;top:892px" width="8" height="12"><path d="M4,1 L7.5,4.5 H5.2 V7.5 H7.5 L4,11 L0.5,7.5 H2.8 V4.5 H0.5Z" fill="#1ee83c"/></svg>
<div style="position:absolute;left:389px;top:904.5px;height:12px;font:bold 13.333px/12px 'Liberation Mono',monospace;white-space:pre;-webkit-text-stroke:0.2px currentColor;"><span style="color:#ffffff">var</span></div>
<div style="position:absolute;left:389px;top:916.5px;height:12px;font:bold 13.333px/12px 'Liberation Mono',monospace;white-space:pre;-webkit-text-stroke:0.2px currentColor;"><span style="color:#ffff70">x</span><span style="color:#ffff70">,</span><span style="color:#ffff70">y</span><span style="color:#ffff70">:</span><span style="color:#ffff70">integer</span><span style="color:#ffff70">;</span></div>
<div style="position:absolute;left:389px;top:928.5px;height:12px;font:bold 13.333px/12px 'Liberation Mono',monospace;white-space:pre;-webkit-text-stroke:0.2px currentColor;"><span style="color:#ffffff">begin</span></div>
<div style="position:absolute;left:389px;top:940.5px;height:12px;font:bold 13.333px/12px 'Liberation Mono',monospace;white-space:pre;-webkit-text-stroke:0.2px currentColor;"><span style="color:#ffff70">writeln</span><span style="color:#ffff70">(’</span><span style="color:#ffff70">vvedi</span><span style="color:#ffff70"> </span><span style="color:#ffff70">dva</span><span style="color:#ffff70"> </span><span style="color:#ffff70">chisla</span><span style="color:#ffff70">’);</span></div>
<div style="position:absolute;left:389px;top:952.5px;height:12px;font:bold 13.333px/12px 'Liberation Mono',monospace;white-space:pre;-webkit-text-stroke:0.2px currentColor;"><span style="color:#ffff70">readln</span><span style="color:#ffff70">(</span><span style="color:#ffff70">x</span><span style="color:#ffff70">,</span><span style="color:#ffff70">y</span><span style="color:#ffff70">);</span></div>
<div style="position:absolute;left:389px;top:964.5px;height:12px;font:bold 13.333px/12px 'Liberation Mono',monospace;white-space:pre;-webkit-text-stroke:0.2px currentColor;"><span style="color:#ffffff">if</span><span style="color:#ffff70"> </span><span style="color:#ffff70">x</span><span style="color:#ffff70">&gt;</span><span style="color:#ffff70">y</span><span style="color:#ffff70"> </span><span style="color:#ffffff">then</span><span style="color:#ffff70"> </span><span style="color:#ffff70">writeln</span><span style="color:#ffff70"> (</span><span style="color:#ffff70">x</span><span style="color:#ffff70">:1:5) </span><span style="color:#ffffff">else</span><span style="color:#ffff70"> </span><span style="color:#ffff70">writeln</span><span style="color:#ffff70"> (</span><span style="color:#ffff70">y</span><span style="color:#ffff70">:1:4);</span></div>
<div style="position:absolute;left:389px;top:976.5px;height:12px;font:bold 13.333px/12px 'Liberation Mono',monospace;white-space:pre;-webkit-text-stroke:0.2px currentColor;"><span style="color:#ffff70">readln</span><span style="color:#ffff70">;</span></div>
<div style="position:absolute;left:389px;top:988.5px;height:12px;font:bold 13.333px/12px 'Liberation Mono',monospace;white-space:pre;-webkit-text-stroke:0.2px currentColor;"><span style="color:#ffffff">end</span><span style="color:#ffff70">.</span></div>
<svg style="position:absolute;left:1013px;top:904px" width="8" height="252"><rect x="0" y="0" width="8" height="252" fill="url(#chk)"/><rect x="0" y="0" width="8" height="24" fill="#108898"/><path d="M4,1.5 L7,9 H1Z" fill="#000080"/><rect x="2" y="15" width="4" height="7" fill="#000080"/><rect x="0" y="240" width="8" height="12" fill="#108898"/><path d="M1,243 H7 L4,250Z" fill="#000080"/></svg>
<div style="position:absolute;left:445px;top:1156px;width:48px;height:12px;background:#000080"></div>
<div style="position:absolute;left:445px;top:1156.5px;height:12px;font:bold 13.333px/12px 'Liberation Mono',monospace;white-space:pre;-webkit-text-stroke:0.2px currentColor;"><span style="color:#fff"> 0:0 </span></div>
<div style="position:absolute;left:397px;top:1156px;width:8px;height:12px;background:#000080"></div>
<svg style="position:absolute;left:397px;top:1156px" width="8" height="12"><path d="M0,5.2 H8 M0,8.2 H8" stroke="#fff" stroke-width="1.6"/><circle cx="4" cy="6.5" r="2.3" fill="#fff"/><path d="M4,2 V11 M0,6.5 H8 M1,3.5 L7,9.5 M7,3.5 L1,9.5" stroke="#fff" stroke-width="1"/><circle cx="4" cy="6.5" r="1" fill="#000080"/></svg>
<svg style="position:absolute;left:525px;top:1156px" width="480" height="12"><rect x="0" y="0" width="480" height="12" fill="url(#chk)"/><rect x="0" y="0" width="16" height="12" fill="#108898"/><path d="M1.5,6 L7.5,2 V10Z" fill="#000080"/><rect x="10" y="2" width="4" height="8" fill="#000080"/><rect x="472" y="0" width="8" height="12" fill="#108898"/><path d="M478.5,6 L472,2 V10Z" fill="#000080"/></svg>
<div style="position:absolute;left:1005px;top:1156px;width:16px;height:12px;background:#000080"></div>
<svg style="position:absolute;left:1005px;top:1156px" width="16" height="12"><path d="M0,5.3 H12.5 V0" fill="none" stroke="#55ff55" stroke-width="1.6"/></svg>
<div style="position:absolute;left:381px;top:1168px;width:640px;height:12px;background:#c0c0c0"></div>
<div style="position:absolute;left:389px;top:1168.5px;height:12px;font:bold 13.333px/12px 'Liberation Mono',monospace;white-space:pre;-webkit-text-stroke:0.2px currentColor;"><span style="color:#800000">F1</span><span style="color:#000"> Help</span></div>
<div style="position:absolute;left:461px;top:1168.5px;height:12px;font:bold 13.333px/12px 'Liberation Mono',monospace;white-space:pre;-webkit-text-stroke:0.2px currentColor;"><span style="color:#800000">F2</span><span style="color:#000"> Save</span></div>
<div style="position:absolute;left:533px;top:1168.5px;height:12px;font:bold 13.333px/12px 'Liberation Mono',monospace;white-space:pre;-webkit-text-stroke:0.2px currentColor;"><span style="color:#800000">F3</span><span style="color:#000"> Open</span></div>
<div style="position:absolute;left:605px;top:1168.5px;height:12px;font:bold 13.333px/12px 'Liberation Mono',monospace;white-space:pre;-webkit-text-stroke:0.2px currentColor;"><span style="color:#800000">Alt+F9</span><span style="color:#000"> Compile</span></div>
<div style="position:absolute;left:733px;top:1168.5px;height:12px;font:bold 13.333px/12px 'Liberation Mono',monospace;white-space:pre;-webkit-text-stroke:0.2px currentColor;"><span style="color:#800000">F9</span><span style="color:#000"> Make</span></div>
<div style="position:absolute;left:805px;top:1168.5px;height:12px;font:bold 13.333px/12px 'Liberation Mono',monospace;white-space:pre;-webkit-text-stroke:0.2px currentColor;"><span style="color:#800000">Alt+F10</span><span style="color:#000"> Local menu</span></div>
</div>
<div id="frame" style="position:absolute;left:0;top:0;width:1280px;height:29px;background:#fff"></div>
<svg style="position:absolute;left:0;top:0" width="1280" height="32"><line x1="0" y1="28.5" x2="1280" y2="28.5" stroke="#9c9c9c" stroke-width="1"/><path d="M777.6,28.5 L790.5,0.9 L970.4,0.9 L983,28.5 Z" fill="#d3d3d3" stroke="#a2a2a2" stroke-width="1"/><path d="M584.6,28.5 L597.5,0.9 L777.4,0.9 L790,28.5 Z" fill="#d3d3d3" stroke="#a2a2a2" stroke-width="1"/><path d="M198.6,28.5 L211.5,0.9 L391.4,0.9 L404,28.5 Z" fill="#d3d3d3" stroke="#a2a2a2" stroke-width="1"/><path d="M5.6,28.5 L18.5,0.9 L198.4,0.9 L211,28.5 Z" fill="#d3d3d3" stroke="#a2a2a2" stroke-width="1"/><path d="M389.6,29 L391.6,28 L404.5,0.9 L584.4,0.9 L597,28 L599,29 Z" fill="#f2f2f2" stroke="#a2a2a2" stroke-width="1"/><rect x="390.6" y="28" width="208.39999999999998" height="3" fill="#f2f2f2"/><path d="M981.5,8 L1005,8 Q1007,8 1008,10 L1014,21 Q1015,23.5 1012,23.5 L989,23.5 Q987,23.5 986,21.5 L980.5,10 Q980,8 981.5,8 Z" fill="#d3d3d3" stroke="#b4b4b4" stroke-width="0.9"/></svg>
<div style="position:absolute;left:22px;top:7px;width:16px;height:16px;background:#4a76a8;border-radius:3px"><div style="position:absolute;left:3px;top:4px;width:10px;height:7px;background:#fff;border-radius:1px"></div><div style="position:absolute;left:6px;top:10px;width:0;height:0;border-left:2px solid transparent;border-right:2px solid transparent;border-top:3px solid #fff"></div></div>
<div style="position:absolute;left:44px;top:6.7px;width:120px;height:18px;overflow:hidden;white-space:nowrap;font:12.4px/18px 'Liberation Sans',sans-serif;color:#1e1e1e">Диалоги<div style="position:absolute;right:0;top:0;width:22px;height:18px;background:linear-gradient(90deg,rgba(0,0,0,0),#d3d3d3)"></div></div>
<svg style="position:absolute;left:183.75px;top:10px" width="10" height="10"><path d="M1,1 L9,9 M9,1 L1,9" stroke="#555" stroke-width="1.6"/></svg>
<div style="position:absolute;left:216px;top:4.5px;font:19px/22px 'Liberation Sans',sans-serif;color:#d83a1e;transform:scaleX(0.85);-webkit-text-stroke:0.4px #d83a1e">Я</div>
<div style="position:absolute;left:237px;top:6.7px;width:133px;height:18px;overflow:hidden;white-space:nowrap;font:12.4px/18px 'Liberation Sans',sans-serif;color:#1e1e1e">Заполни пропуски в пр<div style="position:absolute;right:0;top:0;width:22px;height:18px;background:linear-gradient(90deg,rgba(0,0,0,0),#d3d3d3)"></div></div>
<svg style="position:absolute;left:376.75px;top:10px" width="10" height="10"><path d="M1,1 L9,9 M9,1 L1,9" stroke="#555" stroke-width="1.6"/></svg>
<div style="position:absolute;left:408.5px;top:10px;width:6.3px;height:9.5px;background:#7cb342"></div><div style="position:absolute;left:416.4px;top:10px;width:6.5px;height:9.5px;background:#7cb342"></div>
<div style="position:absolute;left:430px;top:6.7px;width:133px;height:18px;overflow:hidden;white-space:nowrap;font:12.4px/18px 'Liberation Sans',sans-serif;color:#1e1e1e">4. Большее из двух чисе<div style="position:absolute;right:0;top:0;width:22px;height:18px;background:linear-gradient(90deg,rgba(0,0,0,0),#f2f2f2)"></div></div>
<svg style="position:absolute;left:569.75px;top:10px" width="10" height="10"><path d="M1,1 L9,9 M9,1 L1,9" stroke="#555" stroke-width="1.6"/></svg>
<div style="position:absolute;left:601px;top:7px;width:16px;height:16px;background:#000;transform:skewY(-8deg)"><div style="position:absolute;left:4px;top:0px;font:bold 13px/16px 'Liberation Sans',sans-serif;color:#fff">3</div></div>
<div style="position:absolute;left:623px;top:6.7px;width:133px;height:18px;overflow:hidden;white-space:nowrap;font:12.4px/18px 'Liberation Sans',sans-serif;color:#1e1e1e">Запиши программу на я<div style="position:absolute;right:0;top:0;width:22px;height:18px;background:linear-gradient(90deg,rgba(0,0,0,0),#d3d3d3)"></div></div>
<svg style="position:absolute;left:762.75px;top:10px" width="10" height="10"><path d="M1,1 L9,9 M9,1 L1,9" stroke="#555" stroke-width="1.6"/></svg>
<div style="position:absolute;left:794px;top:7px;width:16px;height:16px;background:#000;transform:skewY(-8deg)"><div style="position:absolute;left:4px;top:0px;font:bold 13px/16px 'Liberation Sans',sans-serif;color:#fff">3</div></div>
<div style="position:absolute;left:816px;top:6.7px;width:133px;height:18px;overflow:hidden;white-space:nowrap;font:12.4px/18px 'Liberation Sans',sans-serif;color:#1e1e1e">Дано целое число. Если<div style="position:absolute;right:0;top:0;width:22px;height:18px;background:linear-gradient(90deg,rgba(0,0,0,0),#d3d3d3)"></div></div>
<svg style="position:absolute;left:955.75px;top:10px" width="10" height="10"><path d="M1,1 L9,9 M9,1 L1,9" stroke="#555" stroke-width="1.6"/></svg>
<svg style="position:absolute;left:167px;top:9px" width="12" height="12"><path d="M0,4 h3 l4,-3.5 v11 l-4,-3.5 h-3z" fill="#555"/><path d="M8.5,3.5 q1.8,2.5 0,5 M10,1.5 q3,4.5 0,9" stroke="#555" stroke-width="1.1" fill="none"/></svg>
<svg style="position:absolute;left:1106px;top:4px" width="18" height="18"><circle cx="9" cy="9" r="7" fill="#6b6b6b"/><circle cx="9" cy="6.8" r="2.6" fill="#fff"/><path d="M4.2,13.2 Q9,8.2 13.8,13.2 Q9,16.5 4.2,13.2Z" fill="#fff"/></svg>
<div style="position:absolute;left:1159px;top:12px;width:11px;height:1px;background:#222"></div>
<svg style="position:absolute;left:1203px;top:7px" width="12" height="12"><path d="M2.5,3.5 h7 v7 h-7z M4.5,3.5 v-2 h7 v7 h-2" fill="none" stroke="#222" stroke-width="1"/></svg>
<svg style="position:absolute;left:1248px;top:7px" width="13" height="13"><path d="M1,1 L12,12 M12,1 L1,12" stroke="#222" stroke-width="1.1"/></svg>
<div style="position:absolute;left:0;top:29px;width:1280px;height:36px;background:#f2f2f2;border-bottom:1px solid #a9a9a9"></div>
<svg style="position:absolute;left:10px;top:39px" width="16" height="16"><path d="M15,8 H2.5 M8,2 L2,8 L8,14" fill="none" stroke="#5a5a5a" stroke-width="2"/></svg>
<svg style="position:absolute;left:38px;top:39px" width="16" height="16"><path d="M1,8 H13.5 M8,2 L14,8 L8,14" fill="none" stroke="#d0d0d0" stroke-width="1.8"/></svg>
<svg style="position:absolute;left:66px;top:39px" width="16" height="16"><path d="M13.6,8 A5.6,5.6 0 1 1 10.8,3.15" fill="none" stroke="#555" stroke-width="2"/><path d="M15,1 V6.8 H9.2Z" fill="#555"/></svg>
<div style="position:absolute;left:92px;top:33px;width:1086px;height:26px;background:#fff;border:1px solid #bdbdbd;border-radius:2px"></div>
<svg style="position:absolute;left:98px;top:40px" width="15" height="15"><circle cx="7.5" cy="7.5" r="6.5" fill="none" stroke="#5a5a5a" stroke-width="1.6"/><rect x="6.6" y="6.2" width="1.8" height="5" fill="#5a5a5a"/><rect x="6.6" y="3.5" width="1.8" height="1.8" fill="#5a5a5a"/></svg>
<div style="position:absolute;left:119px;top:38px;font:14px/18px 'Liberation Sans',sans-serif;color:#222;white-space:nowrap;letter-spacing:-0.18px">www.yaklass.ru<span style="color:#7b7b7b">/TestWorkRun/Exercise?testResultId=18946016&amp;exercisePosition=4</span></div>
<svg style="position:absolute;left:1158px;top:39px" width="16" height="16"><path d="M8,1.6 L9.9,5.9 L14.5,6.3 L11,9.4 L12.1,13.9 L8,11.5 L3.9,13.9 L5,9.4 L1.5,6.3 L6.1,5.9 Z" fill="none" stroke="#505050" stroke-width="1.5" stroke-linejoin="round"/></svg>
<svg style="position:absolute;left:1190.8px;top:39.5px" width="15" height="15"><rect x="0" y="0" width="14.4" height="14.4" fill="#fff"/><rect x="1.4" y="1.4" width="4.8" height="4.8" rx="1" fill="none" stroke="#333" stroke-width="1.8"/><circle cx="3.8" cy="3.8" r="0.9" fill="#333"/><rect x="7.3" y="1.6" width="1.6" height="4.4" fill="#333"/><path d="M10,1.2 Q13.2,1.4 13.2,3.6 Q13,5.2 11.5,5.6 V4 Q11.8,2.8 10,2.8Z" fill="#333"/><rect x="10" y="4.6" width="1.5" height="1.5" fill="#333"/><path d="M1.2,8.2 H3 V9.6 H1.2Z M4.6,8.2 H6.2 V9.8 H4.6Z M2.6,10.2 H4.4 V11.6 H2.6Z M1.2,12 H2.8 V13.4 H1.2Z M5,11.8 H6.6 V13.4 H5Z" fill="#333"/><path d="M10.5,10.6 L10.5,7.2 A3.4,3.4 0 1 1 7.1,10.6Z" fill="#222"/></svg>
<div style="position:absolute;left:1222px;top:39px;width:15.5px;height:15.5px;border-radius:50%;background:#fff"></div><div style="position:absolute;left:1226px;top:38.5px;font:14px/16px 'Liberation Sans',sans-serif;color:#b51d2b;transform:scaleX(0.72);-webkit-text-stroke:0.3px #b51d2b">Я</div>
<div style="position:absolute;left:1260.7px;top:40.6px;width:3.6px;height:3.6px;border-radius:2px;background:#505050"></div><div style="position:absolute;left:1260.7px;top:45.2px;width:3.6px;height:3.6px;border-radius:2px;background:#505050"></div><div style="position:absolute;left:1260.7px;top:49.8px;width:3.6px;height:3.6px;border-radius:2px;background:#505050"></div>
<div style="position:absolute;left:0;top:984px;width:1280px;height:40px;background:#03040b"></div>
<svg style="position:absolute;left:16px;top:996px" width="17" height="17"><path d="M0,2.3 L7,1.3 V7.3 H0Z M8,1.1 L16,0 V7.3 H8Z M0,8.7 H7 V14.9 L0,13.9Z M8,8.7 H16 V16.2 L8,15.1Z" fill="#fff"/></svg>
<svg style="position:absolute;left:63px;top:995px" width="18" height="18"><circle cx="10.8" cy="6.6" r="5.3" fill="none" stroke="#fff" stroke-width="1.2"/><path d="M7,10.5 L1.2,16.3" stroke="#fff" stroke-width="1.3"/></svg>
<svg style="position:absolute;left:109px;top:996px" width="22" height="16"><rect x="5.8" y="1.9" width="10.8" height="12.3" fill="none" stroke="#fff" stroke-width="1.2"/><path d="M3.6,3.4 H1.6 V12.4 H3.6 M18.6,3.4 H20.6 V12.4 H18.6" fill="none" stroke="#fff" stroke-width="1.1"/></svg>
<svg style="position:absolute;left:158px;top:992px" width="26" height="25"><defs><linearGradient id="ffg" x1="0" y1="1" x2="1" y2="0"><stop offset="0" stop-color="#f0194e"/><stop offset="0.45" stop-color="#ff6a24"/><stop offset="1" stop-color="#ffd42a"/></linearGradient></defs><circle cx="13" cy="12.5" r="11.3" fill="url(#ffg)"/><circle cx="13.6" cy="10" r="6.6" fill="#2f6fd6"/><path d="M9,8 Q12,5.5 15,7" stroke="#6fa6f0" stroke-width="1" fill="none"/><path d="M5.5,12 Q8,17.5 14,17 Q19.5,16 20,10.5 Q18,15 13,14.6 Q9,14 8,10.5Z" fill="#ff7a22"/><path d="M2.5,4.5 L7.5,6.2 L5.5,10.5Z" fill="#ff5a2e"/><path d="M17.5,0.5 Q24.5,4.5 24.3,12.5 Q22.5,7 17,4.5Z" fill="#ffe03a"/></svg>
<svg style="position:absolute;left:209px;top:993px" width="22" height="22"><path d="M20.5,12.5 H5.5 Q6,17.5 12,17.8 Q16.5,17.8 20,15.6 V20 Q16.5,21.8 11.5,21.8 Q1.5,21.5 1,11.5 Q1.2,4.5 6.5,2 Q3.5,5.5 4.5,8.5 Q6.5,4 12.5,4.2 Q20.5,4.6 20.5,12.5Z M6.5,9 H14.5 Q14,6 10.5,6 Q7.2,6.1 6.5,9Z" fill="#1f7ce4" fill-rule="evenodd"/></svg>
<div style="position:absolute;left:245px;top:984px;width:48px;height:40px;background:#3a3a3d"></div>
<div style="position:absolute;left:245px;top:1022px;width:48px;height:2px;background:#76b9ed"></div>
<svg style="position:absolute;left:256.3px;top:991.5px" width="25" height="25"><path d="M12.5,12.5 L4.58,4.58 A11.2,11.2 0 0 1 23.32,9.6Z" fill="#db4437"/><path d="M12.5,12.5 L23.32,9.6 A11.2,11.2 0 0 1 9.6,23.32Z" fill="#fcc934"/><path d="M12.5,12.5 L9.6,23.32 A11.2,11.2 0 0 1 4.58,4.58Z" fill="#1ea362"/><circle cx="12.5" cy="12.5" r="5.3" fill="#fff"/><circle cx="12.5" cy="12.5" r="4.1" fill="#4a87ec"/></svg>
<svg style="position:absolute;left:307px;top:994.5px" width="22" height="19"><path d="M0,0.8 H7 L9,2.3 H21.5 V17.5 H0Z" fill="#e3bd5a"/><rect x="0" y="2.8" width="21.5" height="14.7" fill="#f7d987"/><path d="M4.3,18.2 V11.6 Q4.3,10.4 5.5,10.4 H16.1 Q17.3,10.4 17.3,11.6 V18.2 H14.1 V14 H7.5 V18.2Z" fill="#3b9fd6"/></svg>
<svg style="position:absolute;left:355px;top:992.5px" width="24" height="23"><defs><linearGradient id="opg" x1="0" y1="0" x2="0" y2="1"><stop offset="0" stop-color="#f0202c"/><stop offset="1" stop-color="#b8101c"/></linearGradient></defs><ellipse cx="12" cy="11.3" rx="11" ry="11.2" fill="url(#opg)"/><ellipse cx="12.2" cy="11.3" rx="4.6" ry="7.4" fill="#03040b"/></svg>
<div style="position:absolute;left:396px;top:1022px;width:31px;height:2px;background:#76b9ed"></div><div style="position:absolute;left:427.5px;top:1022px;width:8.5px;height:2px;background:#5b8cbc"></div>
<svg style="position:absolute;left:404px;top:993px" width="24" height="24"><defs><linearGradient id="stg" x1="0" y1="0" x2="0" y2="1"><stop offset="0" stop-color="#122a52"/><stop offset="1" stop-color="#2a78b0"/></linearGradient></defs><circle cx="12" cy="12" r="11.2" fill="url(#stg)"/><circle cx="14.5" cy="8.8" r="3.6" fill="none" stroke="#b8bcc4" stroke-width="1.8"/><circle cx="14.5" cy="8.8" r="1.6" fill="#8a8e98"/><circle cx="8" cy="15.5" r="2.6" fill="#e8ecf0"/><path d="M0.8,12.5 L8,15.8 L12.8,11" stroke="#e8ecf0" stroke-width="2.6" fill="none"/></svg>
<div style="position:absolute;left:445px;top:1022px;width:40px;height:2px;background:#76b9ed"></div>
<svg style="position:absolute;left:454px;top:994px" width="22" height="23"><path d="M3,0 H19 Q21,0 21,2.5 V22 L17,18.5 H3 Q1,18.5 1,16 V2.5 Q1,0 3,0Z" fill="#7289da"/><path d="M5,13 Q5,7.5 7.5,5.5 Q9.5,4.8 11,5.5 Q12.5,4.8 14.5,5.5 Q17,7.5 17,13 Q15.5,14.5 13.5,14.3 L12.8,13.2 Q11,13.7 9.2,13.2 L8.5,14.3 Q6.5,14.5 5,13Z" fill="#fff"/><circle cx="8.8" cy="10.2" r="1.3" fill="#7289da"/><circle cx="13.2" cy="10.2" r="1.3" fill="#7289da"/></svg>
<div style="position:absolute;left:494px;top:1022px;width:40px;height:2px;background:#76b9ed"></div>
<div style="position:absolute;left:502px;top:992px;width:23.5px;height:23.5px;background:#fff;border:1px solid #c9a0c8;box-sizing:border-box;overflow:hidden"><div style="position:absolute;left:1.5px;top:-2px;font:bold 13px/13px 'Liberation Serif',serif;color:#1b2f95">A</div><div style="position:absolute;left:12px;top:-2px;font:bold 13px/13px 'Liberation Serif',serif;color:#2d8a32">B</div><div style="position:absolute;left:7px;top:6px;font:bold 12px/12px 'Liberation Serif',serif;color:#c8242c">C</div><div style="position:absolute;left:0.5px;top:11.5px;font:bold 10px/10px 'Liberation Serif',serif;color:#111;letter-spacing:-0.2px">.net</div></div>
<svg style="position:absolute;left:876px;top:996px" width="18" height="17"><circle cx="6" cy="8" r="3" fill="none" stroke="#fff" stroke-width="1.2"/><path d="M1,16 Q1,11.5 6,11.5 Q11,11.5 11,16" fill="none" stroke="#fff" stroke-width="1.2"/><circle cx="12.5" cy="4" r="2.7" fill="none" stroke="#fff" stroke-width="1.2"/><path d="M9.5,9.5 Q10,7.2 12.5,7.2 Q16.5,7.2 16.5,11.5" fill="none" stroke="#fff" stroke-width="1.2"/></svg>
<svg style="position:absolute;left:913px;top:995px" width="17" height="16"><path d="M2,4 Q8,2 14,4 Q16,9 15,13 Q13,14.5 11,14 L10.5,13 Q8,13.5 5.5,13 L5,14 Q3,14.5 1,13 Q0,9 2,4Z" fill="#fff"/><circle cx="5.8" cy="9" r="1.2" fill="#03040b"/><circle cx="10.2" cy="9" r="1.2" fill="#03040b"/><circle cx="13.5" cy="3" r="3" fill="#e8424a"/></svg>
<svg style="position:absolute;left:936px;top:995px" width="17" height="17"><circle cx="8.5" cy="8.5" r="8" fill="#1e5d9b"/><circle cx="10.5" cy="6.5" r="2.8" fill="none" stroke="#fff" stroke-width="1.4"/><circle cx="5.5" cy="11" r="2" fill="#fff"/><path d="M0.5,10 L5.5,11 L9,8" stroke="#fff" stroke-width="1.4" fill="none"/></svg>
<svg style="position:absolute;left:959px;top:995px" width="18" height="18"><path d="M8,0.5 L15,3 V9 Q15,14 8,17 Q1,14 1,9 V3Z" fill="#fff"/><path d="M8,0.5 V17 M1,8 H15" stroke="#03040b" stroke-width="1.2"/><circle cx="13" cy="13" r="4" fill="#e0434b"/><path d="M11.3,11.3 L14.7,14.7 M14.7,11.3 L11.3,14.7" stroke="#fff" stroke-width="1"/></svg>
<svg style="position:absolute;left:984px;top:995px" width="18" height="18"><path d="M7,1.5 L13,4.5 V10 Q13,14 7,16.5 Q1,14 1,10 V4.5Z" fill="none" stroke="#fff" stroke-width="1.8"/><path d="M11.5,7.5 L17.5,17 H5.5Z" fill="#f5c12e"/><rect x="11" y="11" width="1" height="3" fill="#000"/></svg>
<svg style="position:absolute;left:1011px;top:995px" width="14" height="18"><rect x="3" y="0.5" width="6" height="4" fill="none" stroke="#fff" stroke-width="1"/><rect x="1.5" y="4.5" width="9" height="12" rx="1" fill="none" stroke="#fff" stroke-width="1.2"/><path d="M8,14 L10,16 L13.5,11" stroke="#fff" stroke-width="1" fill="none"/></svg>
<svg style="position:absolute;left:1033px;top:996px" width="16" height="17"><path d="M1,6 H5 L11,1 V16 L5,11 H1Z" fill="#e56a3c"/><path d="M13,5 Q14.5,8.5 13,12" stroke="#6b3a2a" stroke-width="1" fill="none"/></svg>
<svg style="position:absolute;left:1056px;top:997px" width="18" height="14"><circle cx="4" cy="9" r="3" fill="#d42a2a"/><circle cx="9.5" cy="5" r="3" fill="#d42a2a"/><circle cx="14" cy="9.5" r="3" fill="#d42a2a"/><circle cx="9" cy="11" r="2.5" fill="#d42a2a"/></svg>
<svg style="position:absolute;left:1080px;top:995px" width="18" height="17"><rect x="1.5" y="0.5" width="5" height="4" fill="none" stroke="#fff" stroke-width="1"/><rect x="5.5" y="4.5" width="12" height="8" fill="none" stroke="#fff" stroke-width="1.2"/><path d="M1,4.5 V12 M11.5,12.5 V16 M7,16 H16" stroke="#fff" stroke-width="1.2"/></svg>
<svg style="position:absolute;left:1104px;top:996px" width="18" height="17"><path d="M1,6 H4 L9,1.5 V15.5 L4,11 H1Z" fill="none" stroke="#fff" stroke-width="1.2"/><path d="M11,5.5 Q12.5,8.5 11,11.5 M13.5,3.5 Q16,8.5 13.5,13.5" stroke="#fff" stroke-width="1.2" fill="none"/></svg>
<div style="position:absolute;left:1132px;top:996px;font:12.6px/16px 'Liberation Sans',sans-serif;color:#fff;letter-spacing:-0.6px">РУС</div>
<div style="position:absolute;left:1180px;top:988.5px;font:12.6px/16px 'Liberation Sans',sans-serif;color:#fff;letter-spacing:-0.75px">23:11</div>
<div style="position:absolute;left:1168px;top:1006px;font:12.6px/16px 'Liberation Sans',sans-serif;color:#fff;letter-spacing:-0.8px">18.04.2018</div>
<svg style="position:absolute;left:1238px;top:995px" width="18" height="17"><path d="M1,1 H17 V12 H12 L9,16 V12 H1Z" fill="none" stroke="#fff" stroke-width="1.2"/><circle cx="13" cy="12" r="3.5" fill="#03040b" stroke="#fff" stroke-width="1"/></svg>
<div style="position:absolute;left:1275px;top:984px;width:1px;height:40px;background:#555"></div>
</body></html>
